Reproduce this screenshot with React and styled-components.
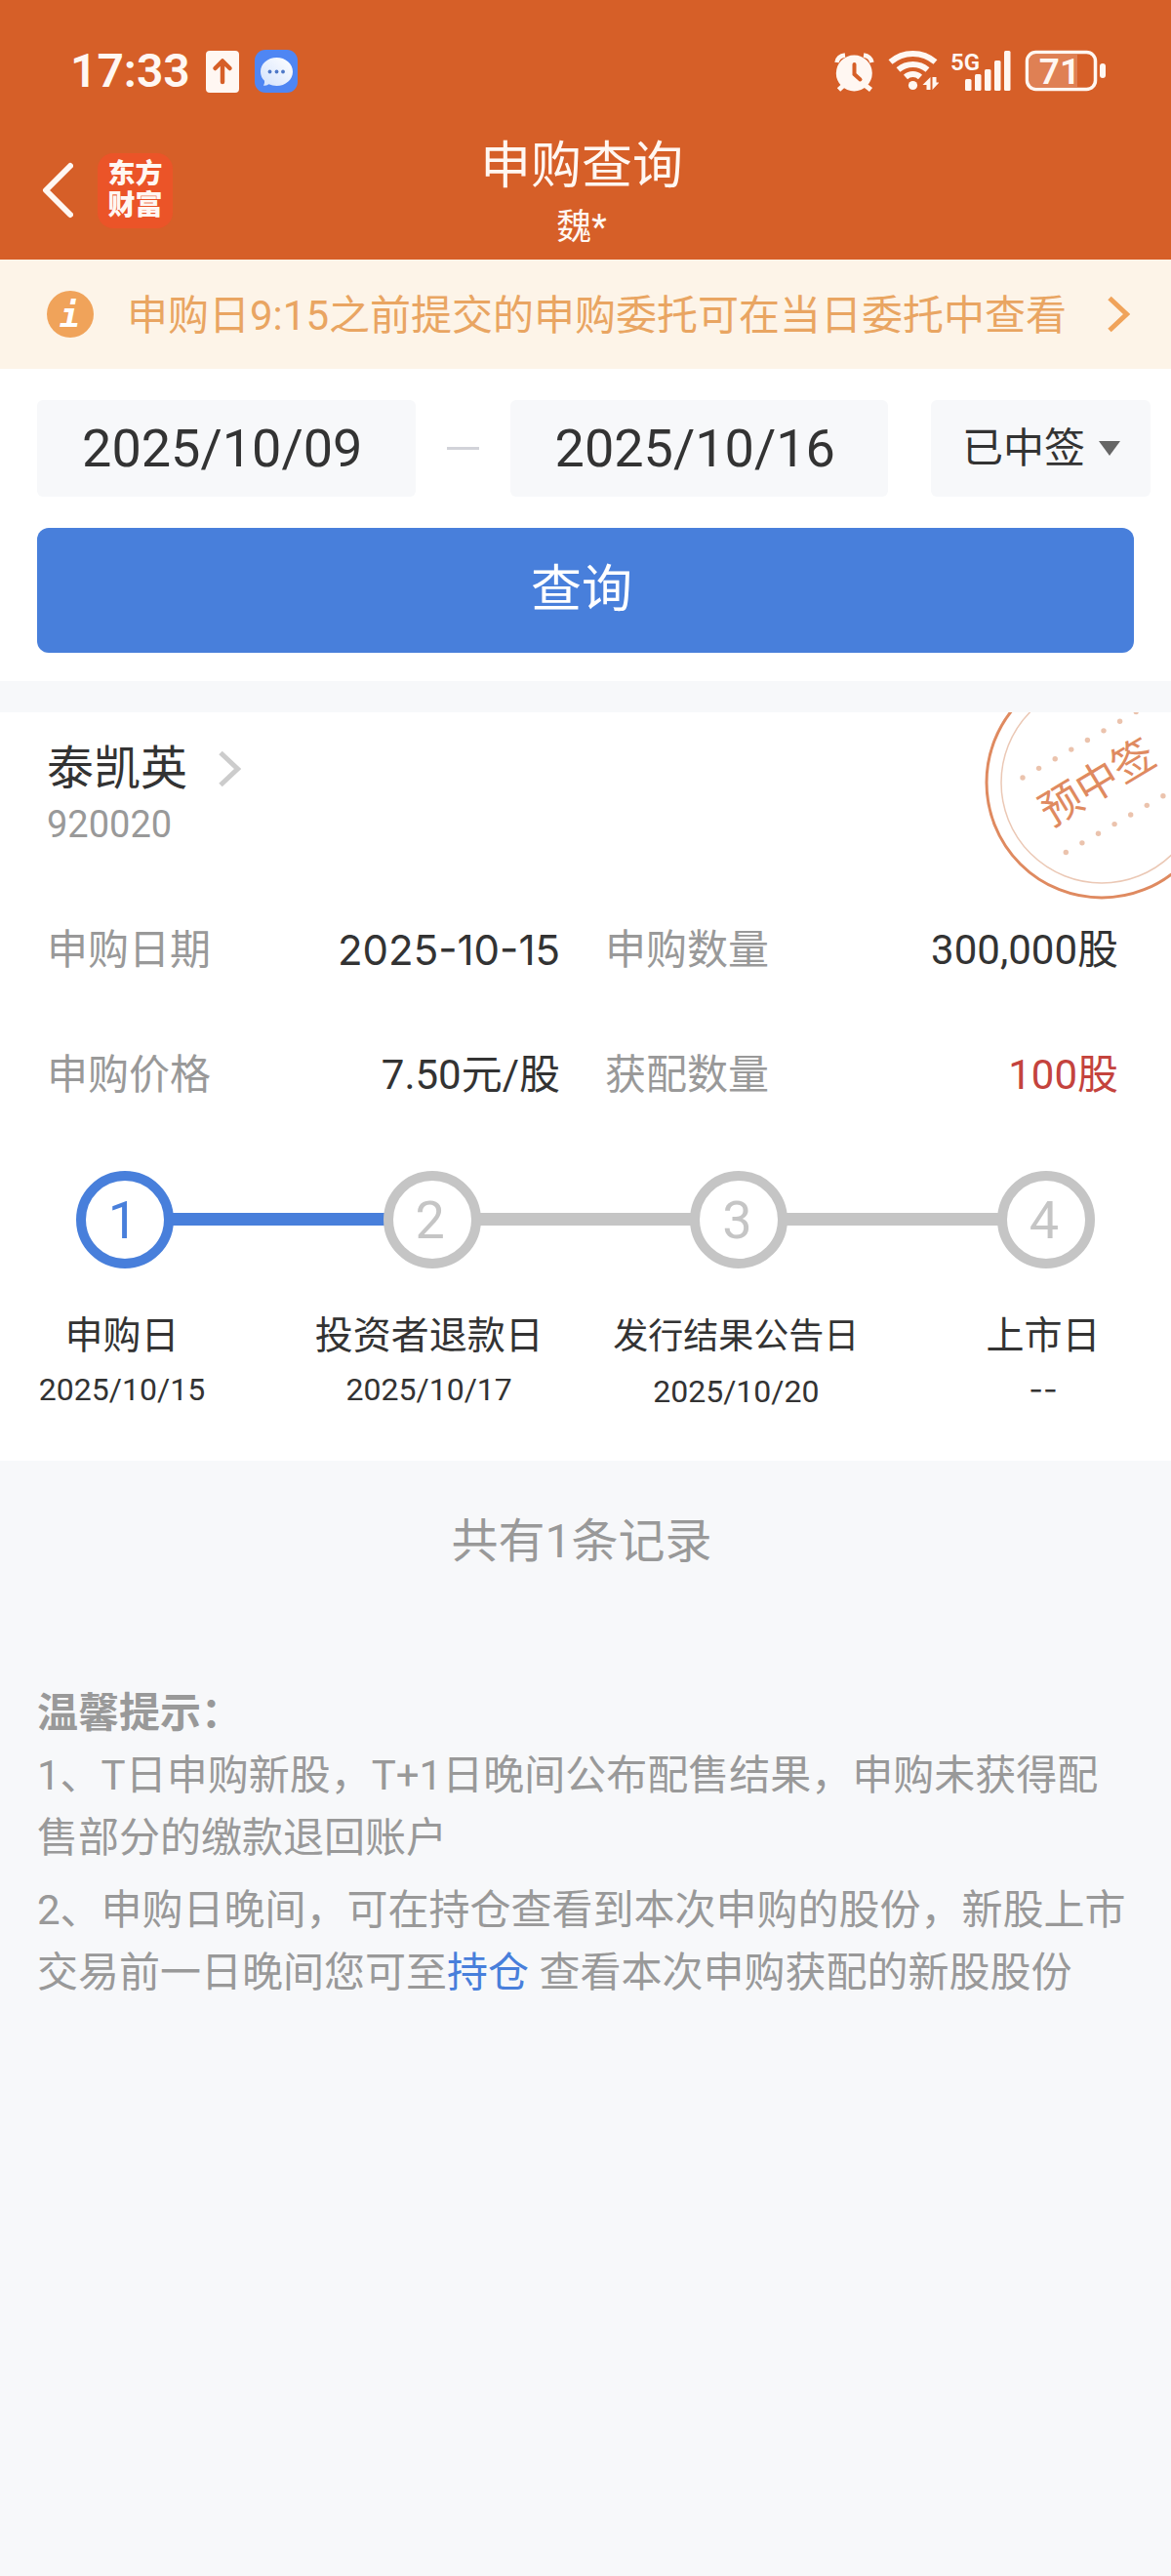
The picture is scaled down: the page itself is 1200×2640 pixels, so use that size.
import React from 'react';
import styled, { createGlobalStyle } from 'styled-components';

const steps = [
  { title: '申购日', date: '2025/10/15', done: true },
  { title: '投资者退款日', date: '2025/10/17' },
  { title: '发行结果公告日', date: '2025/10/20', long: true },
  { title: '上市日', date: '--', dashed: true },
];

const details = [
  { label: '申购日期', value: '2025-10-15', dashed: true },
  { label: '申购数量', value: '300,000股' },
  { label: '申购价格', value: '7.50元/股' },
  { label: '获配数量', value: '100股', highlight: true },
];

function Chevron({ color }) {
  return (
    <svg width="23" height="38" viewBox="0 0 23 38" aria-hidden="true">
      <path d="M2 2.5L19.5 19L2 35.5" fill="none" stroke={color} strokeWidth="5" />
    </svg>
  );
}

function StatusIcons() {
  return (
    <StatusGroup>
      <svg width="45" height="46" viewBox="53 50 45 46" aria-hidden="true">
        <circle cx="74.3" cy="75" r="18.5" fill="#fff7f2" />
        <path d="M56.5 64Q57.5 57.5 65 56.5M92.5 64Q91 57.5 84 56.5" fill="none" stroke="#fff7f2" strokeWidth="4.5" />
        <path d="M58.5 92L64 87M91.5 92L85 87" stroke="#fff7f2" strokeWidth="5" />
        <path d="M74.5 66V76L80.5 81.5" fill="none" stroke="#d65f28" strokeWidth="4" strokeLinecap="round" />
      </svg>
      <svg width="52" height="46" viewBox="110 50 52 46" aria-hidden="true">
        <g fill="none" stroke="#fff7f2" strokeWidth="6">
          <path d="M112.5 63.5A35 35 0 0 1 158.5 63.5" />
          <path d="M120.5 71.5A23 23 0 0 1 150.5 71.5" />
          <path d="M128 79A11 11 0 0 1 143 79" />
        </g>
        <circle cx="135.5" cy="87.5" r="4.6" fill="#fff7f2" />
        <path d="M153.5 79V92H149.5V87H145.5ZM155.5 92V79H159.5V84.5H162.5Z" fill="#fff7f2" />
      </svg>
      <svg width="64" height="46" viewBox="172 50 64 46" aria-hidden="true">
        <g fill="#fff7f2">
          <text x="173" y="72" fontSize="24" fontWeight="600">5G</text>
          <rect x="188" y="81" width="6.5" height="12" rx="1.5" />
          <rect x="198" y="76" width="6.5" height="17" rx="1.5" />
          <rect x="208" y="71" width="6.5" height="22" rx="1.5" />
          <rect x="218" y="62" width="6.5" height="31" rx="1.5" />
          <rect x="228" y="52" width="6.5" height="41" rx="1.5" />
        </g>
      </svg>
      <svg width="86" height="46" viewBox="248 50 86 46" aria-hidden="true">
        <rect x="255" y="56" width="49" height="33" fill="#fff7f2" opacity="0.22" />
        <rect x="252.5" y="53.5" width="70" height="38" rx="9" fill="none" stroke="#fff7f2" strokeWidth="3.5" />
        <rect x="327" y="65" width="6" height="15" rx="3" fill="#fff7f2" />
        <text x="286" y="86" fontSize="37" fontWeight="600" textAnchor="middle" fill="#fff7f2">71</text>
      </svg>
    </StatusGroup>
  );
}

function Stamp() {
  const dots = [0, 1, 2, 3, 4, 5, 6, 7, 8];
  return (
    <StampSvg width="240" height="240" viewBox="0 0 240 240" role="img" aria-label="预中签">
      <circle cx="120" cy="120" r="118" fill="none" stroke="#df8a60" strokeWidth="3" />
      <circle cx="120" cy="120" r="103" fill="none" stroke="#ebc8b5" strokeWidth="1.5" />
      <g fill="#ebc3ad">
        {dots.map((n) => (
          <circle key={n} cx={39 + n * 16.6} cy={115 - n * 9.63} r="2.7" />
        ))}
        {dots.map((n) => (
          <circle key={n} cx={83.3 + n * 16.6} cy={191.5 - n * 9.63} r="2.7" />
        ))}
      </g>
      <text x="115" y="135" fontSize="43" textAnchor="middle" fill="#df8a60" transform="rotate(-31 115 119)">
        预中签
      </text>
    </StampSvg>
  );
}

function Header() {
  return (
    <HeaderBar>
      <StatusBar>
        <StatusGroup $wide>
          <Clock>17:33</Clock>
          <svg width="34" height="43" viewBox="0 0 34 43" aria-hidden="true">
            <rect width="34" height="43" rx="4" fill="#fff7f2" />
            <path d="M17 32V11M9.5 18L17 10.5L24.5 18" fill="none" stroke="#d65f28" strokeWidth="4.5" strokeLinecap="round" strokeLinejoin="round" />
          </svg>
          <svg width="44" height="44" viewBox="0 0 44 44" aria-hidden="true">
            <defs>
              <linearGradient id="bubble" x1="1" y1="0" x2="0" y2="1">
                <stop offset="0" stopColor="#ffffff" />
                <stop offset="1" stopColor="#d3e2fc" />
              </linearGradient>
            </defs>
            <rect width="44" height="44" rx="11" fill="#4f86f3" />
            <path d="M22.5 8C31.6 8 39 14.3 39 22.5S31.6 37 22.5 37Q18 37 14.5 35.3Q12 37 9 36.8Q10.5 34.5 10 31.8Q6 28 6 22.5C6 14.3 13.4 8 22.5 8Z" fill="url(#bubble)" />
            <g fill="#4f79c8">
              <circle cx="15.5" cy="22.5" r="1.9" />
              <circle cx="22.5" cy="22.5" r="1.9" />
              <circle cx="29" cy="22.5" r="1.9" />
            </g>
          </svg>
        </StatusGroup>
        <StatusIcons />
      </StatusBar>
      <NavBar>
        <NavLeft>
          <IconButton aria-label="返回">
            <svg width="32" height="58" viewBox="0 0 32 58" aria-hidden="true">
              <path d="M29 4L4 29L29 54" fill="none" stroke="#fff7f2" strokeWidth="6" strokeLinecap="round" strokeLinejoin="round" />
            </svg>
          </IconButton>
          <Logo>东方<br />财富</Logo>
        </NavLeft>
        <Titles>
          <Title>申购查询</Title>
          <Account>魏*</Account>
        </Titles>
      </NavBar>
    </HeaderBar>
  );
}

function RecordCard() {
  return (
    <Card>
      <Stamp />
      <StockButton>
        泰凯英
        <Chevron color="#ccc" />
      </StockButton>
      <Code>920020</Code>
      <Details>
        {details.map((item) => (
          <Detail key={item.label}>
            <dt>{item.label}</dt>
            <Value $highlight={item.highlight} $dashed={item.dashed}>{item.value}</Value>
          </Detail>
        ))}
      </Details>
      <Steps>
        {steps.map((step, i) => (
          <React.Fragment key={step.title}>
            {i > 0 && <Line $done={steps[i - 1].done} />}
            <Step>
              <Circle $done={step.done}>{i + 1}</Circle>
              <StepTitle $long={step.long}>{step.title}</StepTitle>
              <StepDate $dashed={step.dashed}>{step.date}</StepDate>
            </Step>
          </React.Fragment>
        ))}
      </Steps>
    </Card>
  );
}

function App() {
  return (
    <>
      <GlobalStyle />
      <Header />
      <Notice href="#orders">
        <svg width="48" height="48" viewBox="0 0 48 48" aria-hidden="true">
          <circle cx="24" cy="24" r="24" fill="#f0a35a" />
          <text x="23.5" y="37" textAnchor="middle" fontFamily="DejaVu Sans Mono" fontSize="35" fontWeight="700" fontStyle="italic" fill="#fff">i</text>
        </svg>
        <NoticeText>申购日9:15之前提交的申购委托可在当日委托中查看</NoticeText>
        <Chevron color="#f0a35a" />
      </Notice>
      <Search onSubmit={(e) => e.preventDefault()}>
        <Filters>
          <DateInput type="text" aria-label="开始日期" defaultValue="2025/10/09" />
          <Dash />
          <DateInput type="text" aria-label="结束日期" defaultValue="2025/10/16" />
          <SelectBox>
            <Select aria-label="中签状态" defaultValue="已中签">
              <option>已中签</option>
              <option>未中签</option>
              <option>全部</option>
            </Select>
            <svg width="22" height="15" viewBox="0 0 22 15" aria-hidden="true">
              <path d="M0 0H22L11 15Z" fill="#666" />
            </svg>
          </SelectBox>
        </Filters>
        <SubmitButton type="submit">查询</SubmitButton>
      </Search>
      <RecordCard />
      <Count>共有1条记录</Count>
      <Tips>
        <h2>温馨提示：</h2>
        <p>1、T日申购新股，T+1日晚间公布配售结果，申购未获得配售部分的缴款退回账户</p>
        <p>
          2、申购日晚间，可在持仓查看到本次申购的股份，新股上市交易前一日晚间您可至<a href="#positions">持仓</a> 查看本次申购获配的新股股份
        </p>
      </Tips>
    </>
  );
}

export default App;


const GlobalStyle = createGlobalStyle`
  * {
    box-sizing: border-box;
  }

  body {
    margin: 0;
    background-color: #f7f8fa;
    color: #333;
    font-family: Roboto, "Noto Sans CJK SC", sans-serif;
    font-size: 42px;
    line-height: 64px;
  }

  h1, h2, p, dl, dd, ol {
    margin: 0;
    padding: 0;
  }

  button, input, select {
    font: inherit;
    color: inherit;
    border: none;
    padding: 0;
    background: none;
  }

  svg {
    display: block;
    flex-shrink: 0;
  }
`;

const HeaderBar = styled.header`
  background-color: #d65f28;
  color: #fff7f2;
`;

const StatusBar = styled.div`
  display: flex;
  align-items: center;
  justify-content: space-between;
  padding: 48px 66px 0 72px;
  height: 98px;
`;

const StatusGroup = styled.div`
  display: flex;
  align-items: center;
  gap: ${(props) => (props.$wide ? 16 : 11)}px;
`;

const Clock = styled.span`
  font-size: 48px;
  font-weight: 600;
`;

const NavBar = styled.div`
  display: grid;
  grid-template-columns: 1fr auto 1fr;
  align-items: center;
  padding: 37px 43px 11px;
`;

const NavLeft = styled.div`
  display: flex;
  align-items: center;
  gap: 25px;
`;

const IconButton = styled.button`
  display: flex;
`;

const Logo = styled.div`
  width: 77px;
  height: 77px;
  padding-top: 6px;
  border-radius: 16px;
  background-color: #eb5428;
  font-size: 28px;
  font-weight: 900;
  line-height: 32px;
  text-align: center;
`;

const Titles = styled.div`
  display: flex;
  flex-direction: column;
  align-items: center;
  gap: 8px;
  padding: 4px 8px 0 0;
`;

const Title = styled.h1`
  font-size: 52px;
  font-weight: 400;
`;

const Account = styled.span`
  font-size: 36px;
  line-height: 44px;
`;

const Notice = styled.a`
  display: flex;
  align-items: center;
  height: 112px;
  padding: 0 42px 0 48px;
  background-color: #fdf4e8;
  color: #e9a562;
  text-decoration: none;
`;

const NoticeText = styled.span`
  flex: 1;
  padding: 4px 0 0 34px;
`;

const Search = styled.form`
  padding: 32px 0 29px 38px;
  background-color: #fff;
`;

const Filters = styled.div`
  display: flex;
  align-items: center;
  padding-right: 21px;
`;

const DateInput = styled.input`
  flex: 1;
  min-width: 0;
  height: 99px;
  padding-right: 8px;
  border-radius: 6px;
  background-color: #f7f8fa;
  font-size: 54px;
  text-align: center;
`;

const Dash = styled.span`
  width: 33px;
  height: 3px;
  margin: 0 32px;
  background-color: #d2d3d9;
`;

const SelectBox = styled.div`
  display: flex;
  align-items: center;
  gap: 12px;
  width: 225px;
  height: 99px;
  margin-left: 44px;
  padding: 0 31px 0 32px;
  border-radius: 6px;
  background-color: #f7f8fa;
`;

const Select = styled.select`
  flex: 1;
  min-width: 0;
  appearance: none;
`;

const SubmitButton = styled.button`
  display: block;
  width: calc(100% - 38px);
  height: 128px;
  margin-top: 32px;
  padding-right: 8px;
  border-radius: 12px;
  background-color: #487fdb;
  color: #fff;
  font-size: 52px;
`;

const Card = styled.section`
  position: relative;
  overflow: hidden;
  margin-top: 32px;
  padding: 30px 0 49px;
  background-color: #fff;
`;

const StampSvg = styled.svg`
  position: absolute;
  top: -48px;
  right: -49px;
`;

const StockButton = styled.button`
  display: flex;
  align-items: center;
  gap: 32px;
  margin-left: 48px;
  font-size: 48px;
  line-height: 56px;
`;

const Code = styled.p`
  margin: 9px 0 0 48px;
  color: #999;
  font-size: 38px;
  line-height: 40px;
`;

const Details = styled.dl`
  display: grid;
  grid-template-columns: 1fr 1fr;
  gap: 64px 46px;
  padding: 77px 54px 66px 48px;
`;

const Detail = styled.div`
  display: flex;
  justify-content: space-between;
  color: #999;
`;

/* Roboto hyphens are too short next to its digits */
const Value = styled.dd`
  color: ${(props) => (props.$highlight ? '#c4433d' : '#333')};
  font-family: ${(props) => (props.$dashed ? 'Inter, sans-serif' : 'inherit')};
`;

const Steps = styled.ol`
  display: flex;
  padding: 0 78px;
  list-style: none;
`;

const Step = styled.li`
  display: flex;
  flex-direction: column;
  align-items: center;
  width: 100px;
  white-space: nowrap;
`;

const Circle = styled.div`
  width: 100px;
  height: 100px;
  margin-bottom: 40px;
  padding-right: 4px;
  border: 10px solid;
  border-radius: 50%;
  color: ${(props) => (props.$done ? '#487fdb' : '#c5c5c5')};
  font-size: 54px;
  line-height: 82px;
  text-align: center;
`;

const Line = styled.li`
  flex: 1;
  height: 13px;
  margin: 43px -1px 0;
  background-color: ${(props) => (props.$done ? '#487fdb' : '#c5c5c5')};
`;

const StepTitle = styled.div`
  padding-right: 6px;
  font-size: ${(props) => (props.$long ? 36 : 39)}px;
  line-height: ${(props) => (props.$long ? 60 : 58)}px;
`;

const StepDate = styled.div`
  margin-top: 4px;
  padding-right: 6px;
  font-family: ${(props) => (props.$dashed ? 'Inter, sans-serif' : 'inherit')};
  font-size: 32px;
  line-height: 44px;
`;

const Count = styled.p`
  padding: 51px 8px 112px 0;
  color: #999;
  font-size: 48px;
  text-align: center;
`;

const Tips = styled.section`
  padding: 0 38px 64px;
  color: #999;

  h2 {
    font-size: 42px;
    font-weight: 700;
  }

  p + p {
    margin-top: 10px;
  }

  a {
    color: #487fdb;
    text-decoration: none;
  }
`;
